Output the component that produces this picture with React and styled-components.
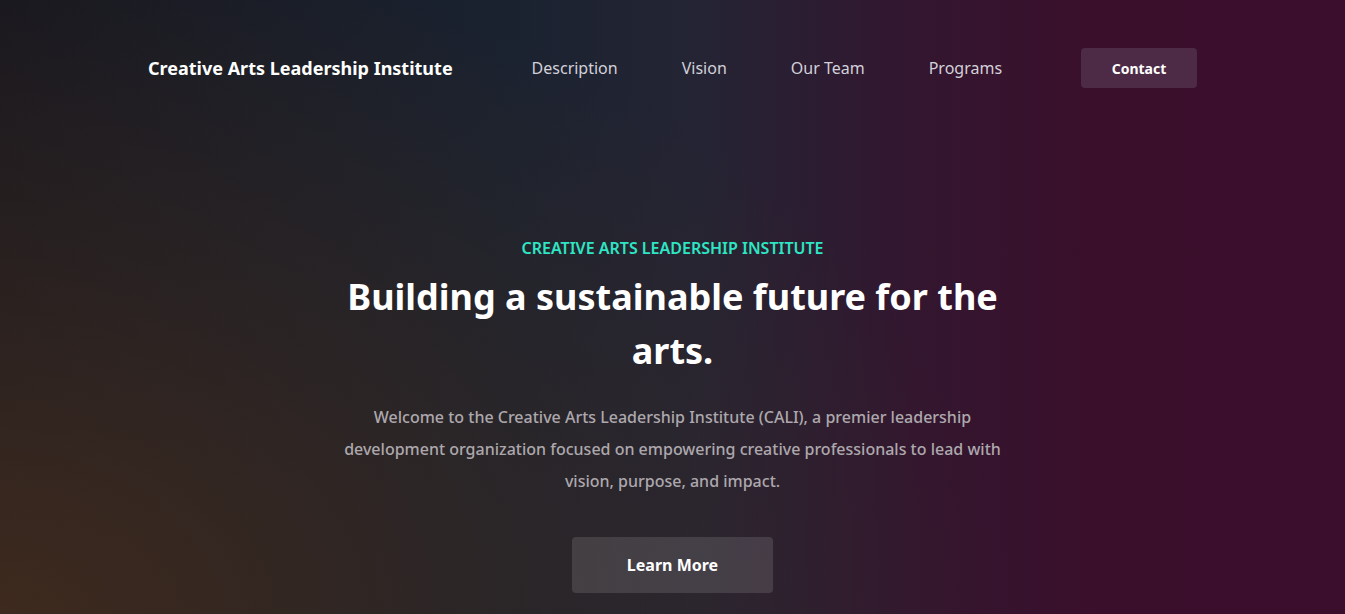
import React from "react";
import styled, { createGlobalStyle } from "styled-components";

const Global = createGlobalStyle`
  * { box-sizing: border-box; }
  html, body { margin: 0; padding: 0; }
  body {
    font-family: "Noto Sans", "Open Sans", sans-serif;
    background: #1c1f2a;
  }
`;

const Page = styled.div`
  min-height: 614px;
  width: 100%;
  overflow: hidden;
  background:
    radial-gradient(ellipse 75% 110% at 0% 100%, rgba(64, 43, 30, 0.95) 0%, rgba(60, 42, 32, 0.6) 40%, rgba(50, 40, 38, 0) 100%),
    linear-gradient(90deg, #17171f 0%, #1a2230 38%, #242434 52%, #33162f 68%, #3a0f2c 82%, #3a0e2c 100%);
  color: #fff;
`;

const Header = styled.header`
  width: 1049px;
  margin: 0 auto;
  padding-top: 48px;
  display: flex;
  align-items: center;
  justify-content: space-between;
`;

const Logo = styled.div`
  font-size: 18px;
  font-weight: 700;
  color: #ffffff;
`;

const NavList = styled.nav`
  display: flex;
  gap: 64px;
`;

const NavLink = styled.a`
  font-size: 16px;
  font-weight: 400;
  color: #d3d1d9;
  text-decoration: none;
`;

const Button = styled.button`
  font-family: inherit;
  border: none;
  border-radius: 4px;
  color: #fff;
  font-weight: 700;
  cursor: pointer;
  background: ${(p) => (p.$variant === "contact" ? "#4d2a46" : "rgba(255,255,255,0.12)")};
  width: ${(p) => (p.$variant === "contact" ? "116px" : "201px")};
  height: ${(p) => (p.$variant === "contact" ? "40px" : "56px")};
  font-size: ${(p) => (p.$variant === "contact" ? "14px" : "16px")};
`;

const Hero = styled.section`
  width: 680px;
  margin: 0 auto;
  padding-top: 150px;
  display: flex;
  flex-direction: column;
  align-items: center;
  text-align: center;
`;

const Eyebrow = styled.div`
  font-size: 16px;
  font-weight: 600;
  color: #2ee6c4;
  line-height: 21px;
`;

const Title = styled.h1`
  margin: 11px 0 0;
  font-size: 36px;
  font-weight: 700;
  line-height: 54px;
  color: #ffffff;
`;

const Lead = styled.p`
  margin: 23px 0 0;
  font-size: 16px;
  font-weight: 500;
  line-height: 32px;
  color: #ada8ad;
`;

const Actions = styled.div`
  margin-top: 40px;
`;

export default function App() {
  return (
    <>
      <Global />
      <Page>
        <Header>
          <Logo>Creative Arts Leadership Institute</Logo>
          <NavList>
            <NavLink href="#">Description</NavLink>
            <NavLink href="#">Vision</NavLink>
            <NavLink href="#">Our Team</NavLink>
            <NavLink href="#">Programs</NavLink>
          </NavList>
          <Button $variant="contact">Contact</Button>
        </Header>
        <Hero>
          <Eyebrow>CREATIVE ARTS LEADERSHIP INSTITUTE</Eyebrow>
          <Title>Building a sustainable future for the arts.</Title>
          <Lead>
            Welcome to the Creative Arts Leadership Institute (CALI), a premier leadership
            development organization focused on empowering creative professionals to lead with
            vision, purpose, and impact.
          </Lead>
          <Actions>
            <Button>Learn More</Button>
          </Actions>
        </Hero>
      </Page>
    </>
  );
}
